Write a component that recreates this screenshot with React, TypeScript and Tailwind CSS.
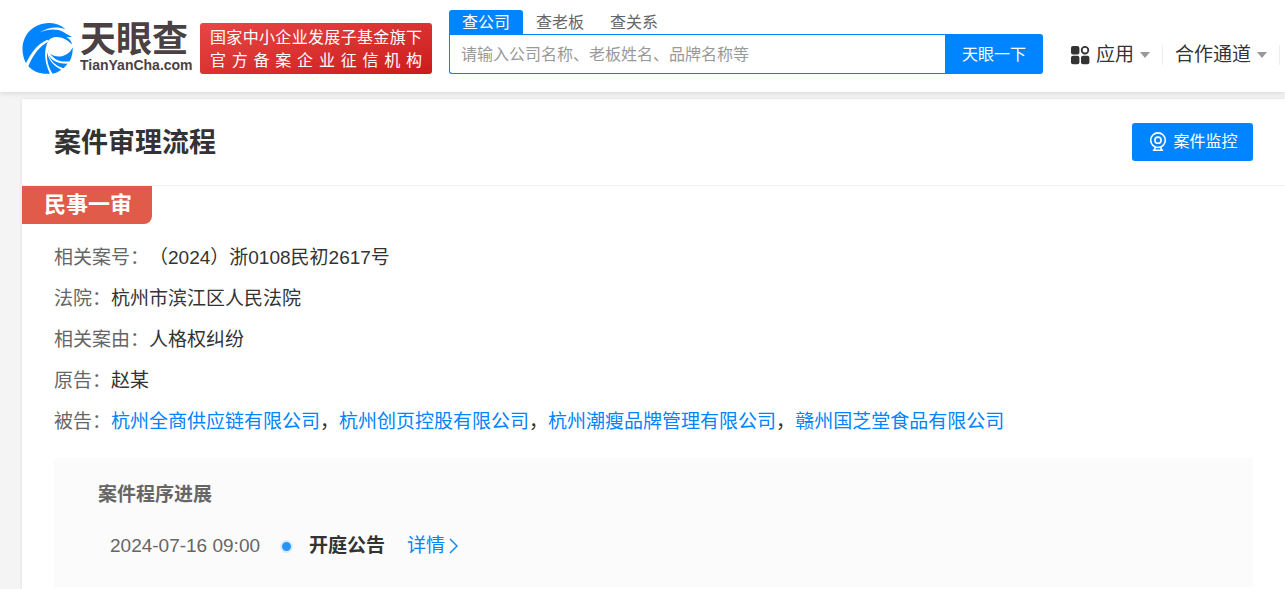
import type { ReactNode } from "react";

const defendants = [
  "杭州全商供应链有限公司",
  "杭州创页控股有限公司",
  "杭州潮瘦品牌管理有限公司",
  "赣州国芝堂食品有限公司",
];

function Swirl() {
  return (
    <svg viewBox="0 0 152 152" className="size-[51px] shrink-0" aria-hidden="true">
      <path
        fill="#0084ff"
        d="M12 120C-7 84 0 40 30 17C62-7 106-5 130 19C104 8 76 14 52 28C78 17 104 16 122 26C132 32 140 38 149 40C143 42 138 43 132 42C142 47 147 54 149 64C136 50 116 40 100 42C86 44 80 50 78 54L76 50C46 62 26 90 12 120Z"
      />
      <path
        fill="#0084ff"
        d="M19 129C34 92 54 70 77 56C65 80 66 116 83 151C56 153 34 146 19 129Z"
      />
      <path
        fill="#0084ff"
        d="M75 88C80 112 96 130 117 139C108 146 99 149 91 151C78 130 73 110 75 88Z"
      />
      <path
        fill="#0084ff"
        d="M77 80C82 94 94 100 108 100C128 99 144 90 151 72C152 84 149 102 142 114C116 118 92 112 77 80ZM80 96C90 114 110 122 136 121C133 126 128 131 123 135C102 128 86 114 80 96Z"
      />
    </svg>
  );
}

function Caret() {
  return (
    <svg viewBox="0 0 10 6" className="h-[6px] w-[10px] fill-[#999]" aria-hidden="true">
      <path d="M0 0H10L5 6Z" />
    </svg>
  );
}

function Row({ label, children }: { label: string; children: ReactNode }) {
  return (
    <div className="flex">
      <dt className="shrink-0 text-[#666]">{label}：</dt>
      <dd>{children}</dd>
    </div>
  );
}

export default function App() {
  return (
    <div className="min-h-screen overflow-x-hidden bg-[#f4f4f4] font-['Liberation_Sans','Noto_Sans_CJK_SC',sans-serif] text-[#333]">
      <header className="relative flex h-[92px] items-start bg-white pl-[22px] shadow-[0_1px_6px_rgba(0,0,0,0.12)]">
        <a href="#home" className="mt-[23px] flex shrink-0 gap-[7px] text-[#4b4143]">
          <Swirl />
          <span className="flex w-[110px] flex-col">
            <span className="text-[36px] leading-[34px] font-bold">天眼查</span>
            <span className="text-[14px] leading-4 font-bold">TianYanCha.com</span>
          </span>
        </a>
        <p className="mt-[23px] ml-[10px] h-[51px] w-[232px] shrink-0 rounded-[3px] bg-linear-to-br from-[#e84545] to-[#cb1a1a] px-[10px] py-[3px] text-[16px] leading-[23px] text-white">
          <span className="block [text-align-last:justify]">国家中小企业发展子基金旗下</span>
          <span className="block [text-align-last:justify]">官方备案企业征信机构</span>
        </p>
        <form className="mt-[10px] ml-[17px] min-w-0 flex-1" onSubmit={(e) => e.preventDefault()}>
          <div className="flex h-6 text-[16px] leading-[26px] text-[#666]">
            <button type="button" className="rounded-t-[3px] bg-[#0084ff] px-[13px] text-white">
              查公司
            </button>
            <button type="button" className="px-[13px]">
              查老板
            </button>
            <button type="button" className="px-[13px]">
              查关系
            </button>
          </div>
          <div className="flex h-10">
            <input
              aria-label="搜索"
              placeholder="请输入公司名称、老板姓名、品牌名称等"
              className="min-w-0 flex-1 rounded-bl-[3px] border border-r-0 border-[#0084ff] px-[11px] pt-[2px] text-[16px] outline-none placeholder:text-[#999]"
            />
            <button type="submit" className="w-[98px] rounded-r-[3px] bg-[#0084ff] pt-[2px] text-[16px] text-white">
              天眼一下
            </button>
          </div>
        </form>
        <nav className="mt-[41px] ml-[27px] flex shrink-0 items-center text-[19px] leading-7">
          <button type="button" className="flex items-center gap-[6px]">
            <svg viewBox="0 0 20 20" className="size-5 fill-[#333]" aria-hidden="true">
              <rect x="1" y="1" width="8.4" height="8.4" rx="2" />
              <circle cx="15" cy="5.2" r="3.3" fill="none" stroke="#333" strokeWidth="1.8" />
              <rect x="1" y="10.8" width="8.4" height="8.4" rx="2" />
              <rect x="11" y="10.8" width="8.4" height="8.4" rx="2" />
            </svg>
            应用
            <Caret />
          </button>
          <span className="mx-3 h-5 w-px bg-[#eee]" />
          <button type="button" className="flex items-center gap-[6px]">
            合作通道
            <Caret />
          </button>
          <span className="mr-[5px] ml-3 h-5 w-px bg-[#eee]" />
        </nav>
      </header>

      <main className="mt-[7px] ml-[22px] bg-white pb-[2px] shadow-[0_0_3px_rgba(0,0,0,0.1)]">
        <div className="flex h-[87px] items-center justify-between border-b border-[#f3f3f3] px-8">
          <h1 className="pt-[2px] text-[27px] leading-10 font-bold">案件审理流程</h1>
          <button
            type="button"
            className="flex h-[38px] w-[121px] items-center justify-center gap-[6px] rounded-[3px] bg-[#0084ff] pl-[2px] text-[16px] text-white"
          >
            <svg viewBox="0 0 18 20" className="h-5 w-[18px] fill-none stroke-white" strokeWidth="1.6" aria-hidden="true">
              <circle cx="9" cy="8.2" r="7.3" />
              <circle cx="9" cy="8.2" r="3.1" />
              <path d="M6.3 15L5.5 18M11.7 15L12.5 18M3.8 18.2H14.2" />
            </svg>
            案件监控
          </button>
        </div>
        <h2 className="flex h-[38px] w-[130px] items-center rounded-br-[8px] bg-[#e05b49] pb-[2px] pl-[22px] text-[22px] font-bold text-white">
          民事一审
        </h2>
        <dl className="px-8 pt-[13px] text-[19px] leading-[41px]">
          <Row label="相关案号">（2024）浙0108民初2617号</Row>
          <Row label="法院">杭州市滨江区人民法院</Row>
          <Row label="相关案由">人格权纠纷</Row>
          <Row label="原告">赵某</Row>
          <Row label="被告">
            {defendants.map((name, i) => (
              <span key={name}>
                {i > 0 && "，"}
                <a href="#company" className="text-[#0084ff]">
                  {name}
                </a>
              </span>
            ))}
          </Row>
        </dl>
        <section className="mx-8 mt-4 h-[129px] rounded-[2px] bg-[#fbfbfb] pt-[22px] pl-11">
          <h3 className="text-[19px] leading-[30px] font-bold text-[#666]">案件程序进展</h3>
          <div className="mt-[21px] flex items-center pl-3 text-[19px] leading-[30px]">
            <time className="text-[#666]">2024-07-16 09:00</time>
            <span className="ml-5 size-[13px] rounded-full border-2 border-[#d9ecff] bg-[#2593ff]" />
            <strong className="ml-4 font-bold">开庭公告</strong>
            <a href="#detail" className="ml-[22px] flex items-center gap-1 text-[#0084ff]">
              详情
              <svg viewBox="0 0 10 16" className="h-4 w-[10px] fill-none stroke-current" strokeWidth="1.4" aria-hidden="true">
                <path d="M1 1L8 8L1 15" />
              </svg>
            </a>
          </div>
        </section>
      </main>
    </div>
  );
}
